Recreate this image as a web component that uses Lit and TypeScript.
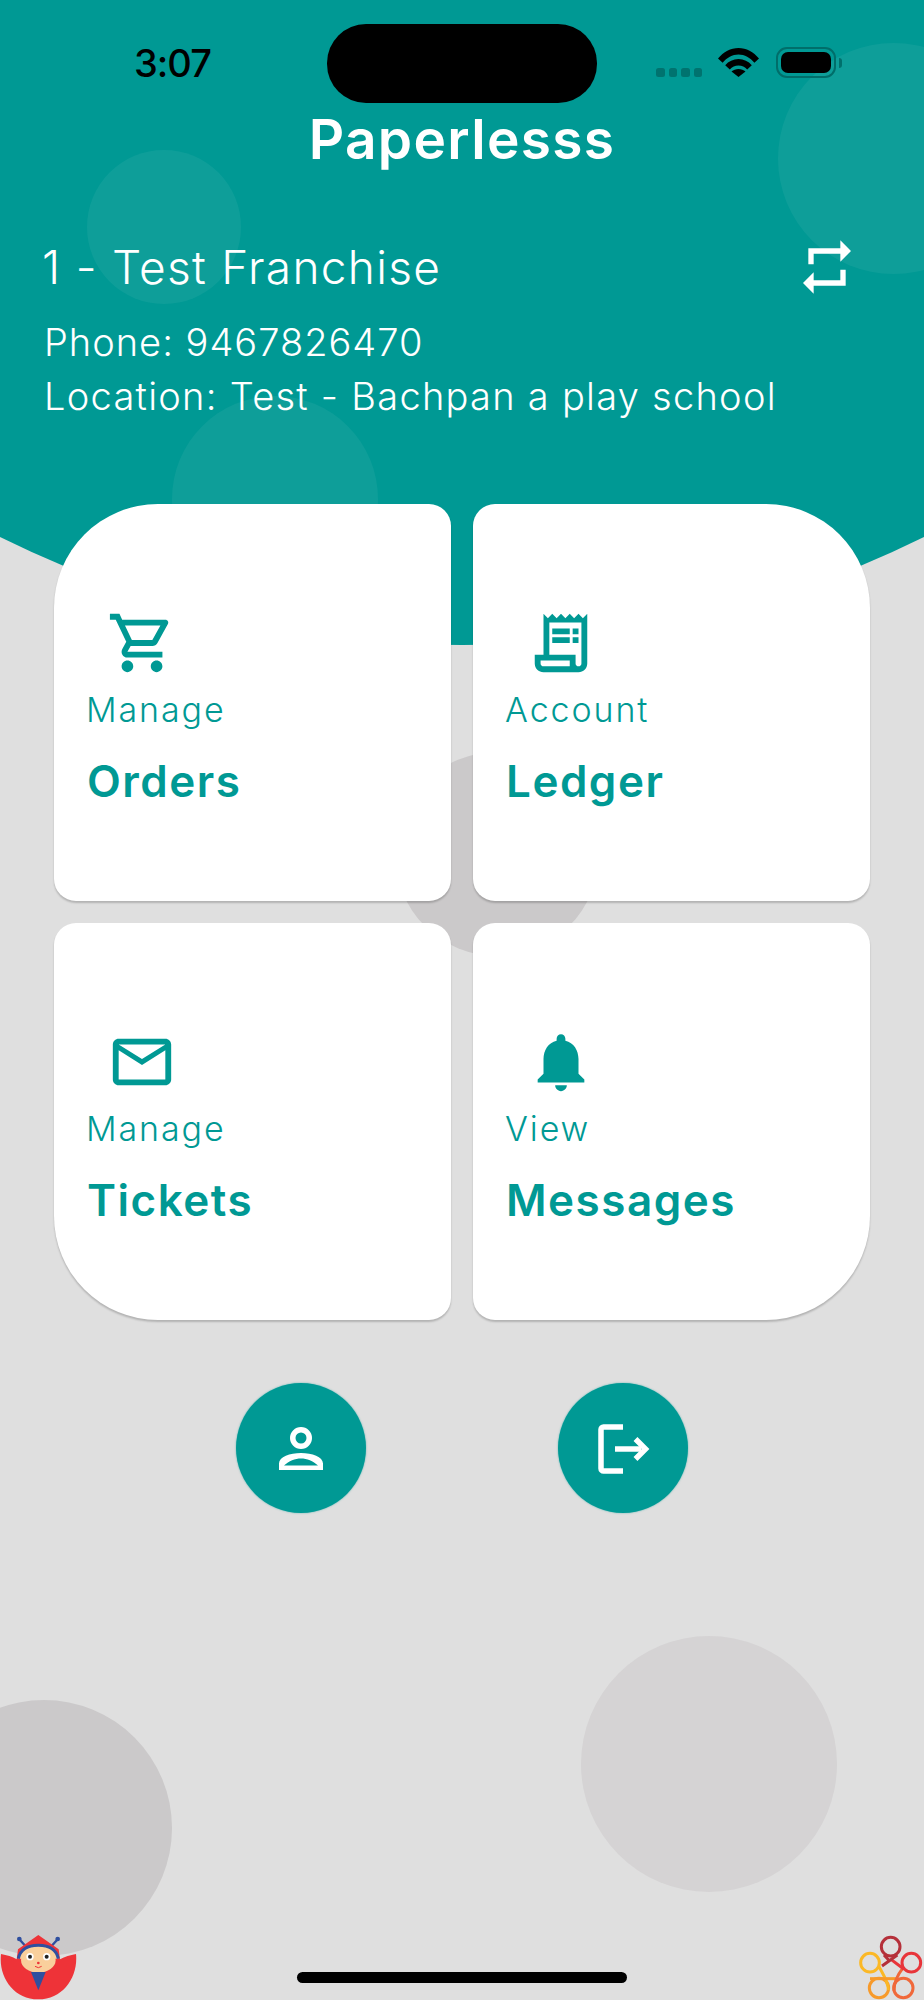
import { LitElement, html, css, svg } from "lit";
import { customElement } from "lit/decorators.js";

const ICONS = {
  cart: svg`<path d="M15.55 13c.75 0 1.41-.41 1.75-1.03l3.58-6.49c.37-.66-.11-1.48-.87-1.48H5.21l-.94-2H1v2h2l3.6 7.59-1.35 2.44C4.52 15.37 5.48 17 7 17h12v-2H7l1.1-2h7.45zM6.16 6h12.15l-2.76 5H8.53L6.16 6zM7 18c-1.1 0-1.99.9-1.99 2S5.9 22 7 22s2-.9 2-2-.9-2-2-2zm10 0c-1.1 0-1.99.9-1.99 2s.89 2 1.99 2 2-.9 2-2-.9-2-2-2z"/>`,
  receipt: svg`<path fill-rule="evenodd" d="M19.5 3.5 18 2l-1.5 1.5L15 2l-1.5 1.5L12 2l-1.5 1.5L9 2 7.5 3.5 6 2v14H3v3c0 1.66 1.34 3 3 3h12c1.66 0 3-1.34 3-3V2l-1.5 1.5zM15 20H6c-.55 0-1-.45-1-1v-1h10v2zm4-1c0 .55-.45 1-1 1s-1-.45-1-1v-3H8V5h11v14z"/><path d="M9 7h6v2H9zm7 0h2v2h-2zM9 10h6v2H9zm7 0h2v2h-2z"/>`,
  mail: svg`<path d="M22 6c0-1.1-.9-2-2-2H4c-1.1 0-2 .9-2 2v12c0 1.1.9 2 2 2h16c1.1 0 2-.9 2-2V6zm-2 0-8 5-8-5h16zm0 12H4V8l8 5 8-5v10z"/>`,
  bell: svg`<path d="M12 22c1.1 0 2-.9 2-2h-4c0 1.1.89 2 2 2zm6-6v-5c0-3.07-1.64-5.64-4.5-6.32V4c0-.83-.67-1.5-1.5-1.5s-1.5.67-1.5 1.5v.68C7.63 5.36 6 7.92 6 11v5l-2 2v1h16v-1l-2-2z"/>`,
};

const CARDS = [
  { icon: ICONS.cart, label: "Manage", value: "Orders", shape: "tl" },
  { icon: ICONS.receipt, label: "Account", value: "Ledger", shape: "tr" },
  { icon: ICONS.mail, label: "Manage", value: "Tickets", shape: "bl" },
  { icon: ICONS.bell, label: "View", value: "Messages", shape: "br" },
];

@customElement("app-root")
export class AppRoot extends LitElement {
  static styles = css`
    :host {
      display: block;
      position: relative;
      width: 924px;
      height: 2000px;
      overflow: hidden;
      background: #dfdfdf;
      font-family: Inter, "Liberation Sans", sans-serif;
      color: #fff;
    }
    .teal {
      position: absolute;
      inset: 0 0 auto 0;
      height: 645px;
      background: #009994;
      clip-path: circle(1042px at 462px -397px);
    }
    .dot { position: absolute; border-radius: 50%; }
    .d1 { left: 87px; top: 150px; width: 154px; height: 154px; background: rgba(255,255,255,.055); }
    .d2 { left: 778px; top: 43px; width: 231px; height: 231px; background: rgba(255,255,255,.055); }
    .d3 { left: 172px; top: 396px; width: 206px; height: 206px; background: rgba(255,255,255,.055); }
    .d4 { left: 395px; top: 752px; width: 204px; height: 204px; background: #cbc9ca; }
    .d5 { left: 581px; top: 1636px; width: 256px; height: 256px; background: #d5d3d4; }
    .d6 { left: -84px; top: 1700px; width: 256px; height: 256px; background: #cbc9ca; }
    .page { position: relative; display: flex; flex-direction: column; }
    .status {
      display: grid;
      grid-template-columns: 327px 270px 1fr;
      height: 79px;
      padding-top: 24px;
    }
    .time {
      padding: 17px 0 0 134px;
      font: 500 38px/44px Inter, "Liberation Sans", sans-serif;
      letter-spacing: -1px;
      color: #000;
    }
    .island { background: #000; border-radius: 39px; }
    .sys { position: relative; display: flex; align-items: flex-start; padding: 23px 0 0 59px; }
    .signal { display: flex; gap: 4px; margin-top: 21px; }
    .signal i { width: 8.5px; height: 8.5px; border-radius: 2.5px; background: #00736f; }
    .wifi { width: 41px; height: 30px; margin-left: 16px; }
    .battery {
      box-sizing: border-box;
      width: 60px;
      height: 31px;
      margin-left: 17px;
      padding: 3px;
      border: 2px solid #006e6a;
      border-radius: 11px;
    }
    .battery i { display: block; height: 100%; background: #000; border-radius: 7px; }
    .nub { width: 3px; height: 10px; margin: 11px 0 0 3px; background: #00706c; border-radius: 0 3px 3px 0; }
    h1 {
      margin: 0;
      padding-top: 4px;
      text-align: center;
      font-size: 55px;
      line-height: 64px;
      font-weight: 600;
      letter-spacing: 1.3px;
    }
    .who { display: flex; flex-direction: column; padding: 68px 0 0 42px; position: relative; }
    .name { font-size: 46px; line-height: 56px; font-weight: 300; letter-spacing: 1.3px; }
    .line { padding-left: 2px; font-size: 38px; line-height: 54px; font-weight: 300; letter-spacing: 1.27px; }
    .phone { margin-top: 20px; letter-spacing: 1px; }
    .swap { position: absolute; left: 795px; top: 64px; width: 64px; height: 64px; fill: #fff; }
    .grid {
      display: grid;
      grid-template-columns: 397px 397px;
      grid-auto-rows: 397px;
      gap: 22px;
      padding: 0 54px;
      margin-top: 81px;
    }
    .card {
      box-sizing: border-box;
      display: flex;
      flex-direction: column;
      align-items: flex-start;
      padding: 104px 0 0 33px;
      background: #fff;
      border-radius: 22px;
      box-shadow: 0 2px 2px rgba(0,0,0,.2);
      color: #009994;
    }
    .tl { border-top-left-radius: 104px; }
    .tr { border-top-right-radius: 104px; }
    .bl { border-bottom-left-radius: 104px; }
    .br { border-bottom-right-radius: 104px; }
    .icon { width: 70px; height: 70px; margin-left: 20px; fill: #009994; }
    .label { margin: 12px 0 0 -1px; font-size: 34px; line-height: 40px; font-weight: 300; letter-spacing: 1.9px; }
    .value { margin-top: 26px; font-size: 44px; line-height: 50px; font-weight: 600; letter-spacing: 1.5px; }
    .actions { display: flex; justify-content: center; gap: 192px; margin-top: 63px; }
    .fab {
      width: 130px;
      height: 130px;
      border-radius: 50%;
      background: #009994;
      box-shadow: 0 0 2px rgba(0,153,148,.6);
    }
    .fab svg { display: block; width: 130px; height: 130px; }
    .mascot { position: absolute; left: 0; bottom: 0; width: 120px; height: 100px; }
    .flower { position: absolute; right: 0; bottom: 0; width: 104px; height: 100px; fill: none; }
    .home {
      position: absolute;
      left: 297px;
      top: 1972px;
      width: 330px;
      height: 11px;
      border-radius: 6px;
      background: #000;
    }
  `;

  render() {
    return html`
      <div class="teal">
        <div class="dot d1"></div>
        <div class="dot d2"></div>
        <div class="dot d3"></div>
      </div>
      <div class="dot d4"></div>
      <div class="dot d5"></div>
      <div class="dot d6"></div>
      <div class="page">
        <div class="status">
          <div class="time">3:07</div>
          <div class="island"></div>
          <div class="sys">
            <div class="signal"><i></i><i></i><i></i><i></i></div>
            <svg class="wifi" viewBox="0 0 41 30">
              <path d="M0 11.5C5.5 5 12.7 1 20.5 1S35.5 5 41 11.5l-4.6 4.3C32.2 10.8 26.6 7.6 20.5 7.6S8.8 10.8 4.6 15.8z" />
              <path d="M7.2 18.2C10.6 14.3 15.2 12 20.5 12s9.900 2.300 13.300 6.200l-4.600 4.200c-2.300-2.600-5.200-4-8.700-4s-6.400 1.400-8.700 4z" />
              <path d="M13.500 24.600c1.900-1.700 4.300-2.600 7-2.600s5.100.9 7 2.600L20.500 30z" />
            </svg>
            <div class="battery"><i></i></div>
            <div class="nub"></div>
          </div>
        </div>
        <h1>Paperlesss</h1>
        <div class="who">
          <div class="name">1 - Test Franchise</div>
          <div class="line phone">Phone: 9467826470</div>
          <div class="line">Location: Test - Bachpan a play school</div>
          <svg class="swap" viewBox="0 0 24 24">
            <path d="M7 7h10v3l4-4-4-4v3H5v6h2V7zm10 10H7v-3l-4 4 4 4v-3h12v-6h-2v4z" />
          </svg>
        </div>
        <div class="grid">
          ${CARDS.map(
            (c) => html`
              <div class="card ${c.shape}">
                <svg class="icon" viewBox="0 0 24 24">${c.icon}</svg>
                <div class="label">${c.label}</div>
                <div class="value">${c.value}</div>
              </div>
            `
          )}
        </div>
        <div class="actions">
          <div class="fab">
            <svg viewBox="0 0 130 130" fill="#fff">
              <path fill-rule="evenodd" d="M65 44a11 11 0 1 0 0 22 11 11 0 0 0 0-22zm0 5.500a5.500 5.500 0 1 1 0 11 5.500 5.500 0 0 1 0-11z" />
              <path fill-rule="evenodd" d="M43 87v-6.500C43 74 54 70 65 70s22 4 22 10.500V87zM48 82.500h34C77 78 71 75.500 65 75.500S53 78 48 82.500z" />
            </svg>
          </div>
          <div class="fab">
            <svg viewBox="0 0 130 130" fill="none" stroke="#fff" stroke-width="5.500">
              <path d="M65 44H45.500a2.500 2.500 0 0 0-2.500 2.500v39a2.500 2.500 0 0 0 2.500 2.500H65" />
              <path d="M57 66h26" />
              <path d="M77.500 56 87.500 66 77.500 76" />
            </svg>
          </div>
        </div>
      </div>
      <svg class="mascot" viewBox="0 0 360 300">
        <g stroke="#2f4f9f" stroke-width="7" fill="none">
          <path d="M85 148 60 120M146 148 171 120" />
        </g>
        <circle cx="58" cy="117" r="7" fill="#2f4f9f" />
        <circle cx="173" cy="117" r="7" fill="#2f4f9f" />
        <path fill="#ee3338" d="M3 162C20 165 38 170 50 178L54 148 115 105 176 148 180 178C195 170 210 165 228 162 235 230 190 298 115 298 40 298-5 230 3 162Z" />
        <path d="M55 176C62 145 88 136 115 136s53 9 60 40" fill="#f9cf9c" stroke="#2f4f9f" stroke-width="9" />
        <ellipse cx="115" cy="180" rx="52" ry="38" fill="#f9cf9c" />
        <path fill="#2f4f9f" d="M93 216h44l-22 55z" />
        <circle cx="90" cy="170" r="11" fill="#fff" />
        <circle cx="140" cy="170" r="11" fill="#fff" />
        <circle cx="90" cy="170" r="6" fill="#222" />
        <circle cx="140" cy="170" r="6" fill="#222" />
        <circle cx="115" cy="189" r="4" fill="#ee3338" />
        <path d="M105 199q10 8 20 0" stroke="#ee3338" stroke-width="3" fill="none" />
      </svg>
      <svg class="flower" viewBox="0 0 312 300" stroke-width="9">
        <circle cx="150" cy="188" r="28" stroke="#fbb826" />
        <circle cx="177" cy="264" r="29" stroke="#f79a2b" />
        <circle cx="250" cy="264" r="29" stroke="#f0683a" />
        <circle cx="274" cy="188" r="28" stroke="#e8353a" />
        <circle cx="212" cy="140" r="28" stroke="#b5303a" />
        <path d="M176 198 C190 225 205 245 205 270" stroke="#fbb826" />
        <path d="M150 236H230" stroke="#f79a2b" />
        <path d="M222 272C222 250 232 225 248 205" stroke="#f0683a" />
        <path d="M252 208C235 195 215 180 212 178" stroke="#e8353a" />
        <path d="M192 165 206 180M232 165 186 198" stroke="#b5303a" />
      </svg>
      <div class="home"></div>
    `;
  }
}
